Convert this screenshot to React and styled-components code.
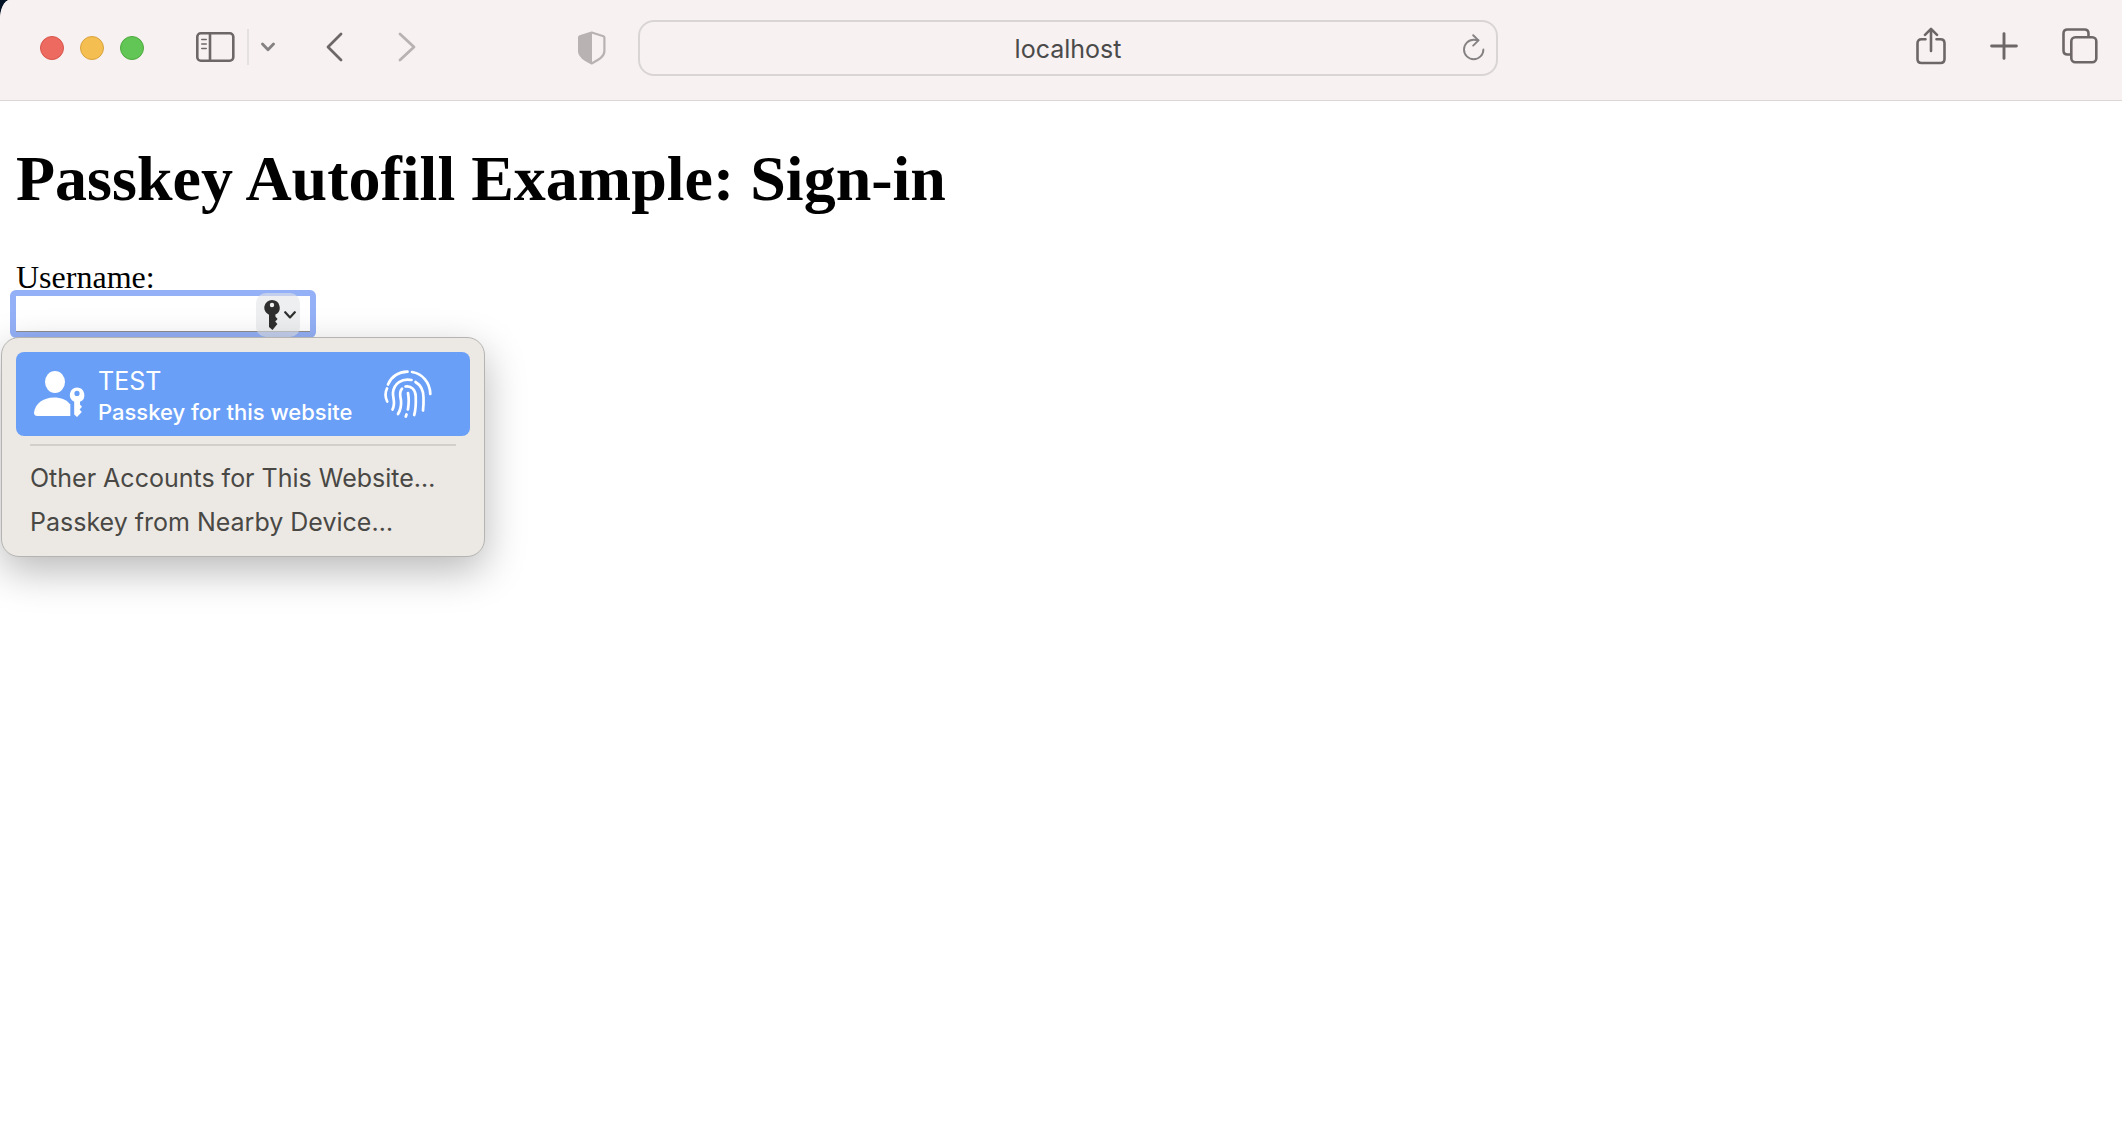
import React from "react";
import styled, { createGlobalStyle } from "styled-components";

const ui = `Inter, "Liberation Sans", sans-serif`;

const tones = {
  strong: "#6e6768",
  medium: "#858182",
  faint: "#b9b2b2",
};

const GlobalStyle = createGlobalStyle`
  *, *::before, *::after { box-sizing: border-box; }
  html { background: #041325; }
  body { margin: 0; }
`;

const Window = styled.div`
  min-height: 100vh;
  background: #fff;
  border-top-left-radius: 10px 20px;
  overflow: hidden;
`;

const Toolbar = styled.header`
  display: flex;
  align-items: center;
  height: 101px;
  padding: 0 24px 4px 40px;
  background: #f7f1f1;
  border-bottom: 1px solid #d9d6d5;
`;

const LeftTools = styled.div`
  display: flex;
  align-items: center;
  flex: 0 1 538px;
`;

const RightTools = styled.div`
  display: flex;
  align-items: center;
  justify-content: flex-end;
  gap: 44px;
  flex: 0 1 600px;
  padding-bottom: 4px;
`;

const CenterTools = styled.div`
  display: flex;
  align-items: center;
  gap: 32px;
  flex: 1 1 auto;
`;

const Lights = styled.div`
  display: flex;
  gap: 16px;
  margin-right: 51px;
`;

const Light = styled.button`
  width: 24px;
  height: 24px;
  padding: 0;
  border: 1px solid ${(p) => p.$edge};
  border-radius: 50%;
  background: ${(p) => p.$fill};
`;

const IconButton = styled.button`
  display: flex;
  padding: 0;
  border: 0;
  background: none;
  color: ${(p) => tones[p.$tone || "strong"]};

  svg { display: block; }
`;

const SidebarGroup = styled.div`
  display: flex;
  align-items: center;
  gap: 12px;
  margin-right: 48px;
  padding-bottom: 2px;
`;

const Divider = styled.span`
  width: 2px;
  height: 36px;
  background: #e6e1e1;
`;

const History = styled.div`
  display: flex;
  gap: 48px;
  padding-bottom: 2px;
`;

const AddressBar = styled.div`
  display: flex;
  align-items: center;
  flex: 1;
  height: 56px;
  padding: 0 10px 0 34px;
  border: 2px solid #d9d5d4;
  border-radius: 16px;
`;

const Address = styled.input`
  flex: 1;
  min-width: 0;
  padding: 2px 0 0;
  border: 0;
  outline: 0;
  background: none;
  color: #4b4a4a;
  font: 400 25px/32px ${ui};
  text-align: center;
`;

const Page = styled.main`
  padding: 40px 16px;
  color: #000;
  font: 32px/32px "Liberation Serif", "Times New Roman", serif;
`;

const Title = styled.h1`
  margin: 2px 0 46px;
  font-size: 64px;
  line-height: 72px;
`;

const Label = styled.label`
  display: block;
`;

const Field = styled.div`
  position: relative;
  width: 306px;
  margin: -3px -6px 0;
`;

const Username = styled.input`
  display: block;
  width: 100%;
  height: 48px;
  padding: 0 56px 0 4px;
  border: 6px solid #94b0f6;
  border-radius: 6px;
  outline: 0;
  background: #fff;
  box-shadow: inset 0 -1px 0 #8d8d8d;
  font: 24px/32px ${ui};
`;

const KeyButton = styled.button`
  position: absolute;
  top: 3px;
  right: 16px;
  display: flex;
  align-items: center;
  justify-content: center;
  gap: 4px;
  width: 44px;
  height: 44px;
  padding: 0 0 0 3px;
  border: 0;
  border-radius: 10px;
  background: rgba(226, 228, 230, 0.6);
  color: #2f2f2f;
`;

const Popup = styled.div`
  position: absolute;
  top: 47px;
  left: -9px;
  width: 484px;
  padding: 14px 14px 12px;
  border: 1px solid #b5b4b2;
  border-radius: 18px;
  background: #ece9e4;
  box-shadow: 0 14px 40px rgba(0, 0, 0, 0.28);
  font-family: ${ui};
`;

const Credential = styled.button`
  display: flex;
  align-items: center;
  gap: 12px;
  width: 100%;
  height: 84px;
  padding: 0 38px 0 18px;
  border: 0;
  border-radius: 8px;
  background: #6a9ff8;
  color: #fff;
  font-family: inherit;
  text-align: left;
`;

const CredentialText = styled.span`
  display: flex;
  flex-direction: column;
  flex: 1;
  gap: 2px;
  padding-top: 4px;
  white-space: nowrap;
`;

const CredentialName = styled.span`
  font-size: 25px;
  line-height: 30px;
`;

const CredentialKind = styled.span`
  font-size: 22px;
  font-weight: 500;
  line-height: 28px;
`;

const Rule = styled.hr`
  height: 2px;
  margin: 8px 14px 10px;
  border: 0;
  background: #d2cec9;
`;

const Option = styled.button`
  display: block;
  width: 100%;
  padding: 0 14px;
  border: 0;
  background: none;
  color: #494845;
  font: 400 25px/44px ${ui};
  text-align: left;
  white-space: nowrap;
`;

const Stroke = ({ w, h, sw = 2.6, children }) => (
  <svg width={w} height={h} viewBox={`0 0 ${w} ${h}`} fill="none" stroke="currentColor"
    strokeWidth={sw} strokeLinecap="round" strokeLinejoin="round" aria-hidden="true">
    {children}
  </svg>
);

const SidebarIcon = () => (
  <Stroke w={40} h={32}>
    <rect x="2.3" y="2.3" width="36" height="27.4" rx="3.5" />
    <path d="M15 2.3v27.4" />
    <path d="M6.800 8.500h4.400M6.800 13h4.400M6.800 17.500h4.400" strokeWidth="1.6" />
  </Stroke>
);

const ShieldIcon = () => (
  <svg width="28" height="34" viewBox="0 0 28 34" aria-hidden="true">
    <path d="M13.7 1.5 25.5 5.3q.9.4.9 1.5V20c0 6-6.5 9-12.7 12.5C7.5 29 1 26 1 20V6.8q0-1.1.9-1.5Z"
      fill="none" stroke="currentColor" strokeWidth="2.2" strokeLinejoin="round" />
    <path d="M14 1.5V32.500C7.500 29 1 26 1 20V6z" fill="currentColor" />
  </svg>
);

const ReloadIcon = () => (
  <Stroke w={24} h={28} sw={1.9}>
    <path d="M21.400 15.500a9.700 9.700 0 1 1-9.700-9.700q2.300 0 4.600.4" />
    <path d="M11.200 1.200 16.500 6.400 11.200 11.600" />
  </Stroke>
);

const ShareIcon = () => (
  <Stroke w={30} h={38}>
    <path d="M9.500 12.300H5.500q-4 0-4 4V32q0 4 4 4h19q4 0 4-4V16.300q0-4-4-4H20.500" />
    <path d="M15 24V2M9 7.800 15 1.800l6 6" />
  </Stroke>
);

const PlusIcon = () => (
  <Stroke w={28} h={28} sw={2.9}>
    <path d="M14 1.600v24.800M1.600 14h24.800" />
  </Stroke>
);

const TabsIcon = () => (
  <Stroke w={36} h={36}>
    <rect x="9.300" y="9.300" width="25" height="25" rx="4" />
    <path d="M26.500 8.500V5.500q0-4-4-4h-17q-4 0-4 4v17q0 4 4 4h3" />
  </Stroke>
);

const PersonKeyIcon = () => (
  <svg width="52" height="48" viewBox="0 0 52 48" fill="currentColor" aria-hidden="true">
    <ellipse cx="21" cy="12" rx="10" ry="11" />
    <path d="M3.500 46Q0 46 0 42.500C1 34 9 27.500 20 27.500c7 0 13 2.500 16.300 7V46Z" />
    <path fillRule="evenodd" d="M43 17.500a7.500 7.500 0 0 1 3 14.300v2.700l2 2.200-2.400 2.700 2.200 2.500L43 47l-2.800-2.600V31.800A7.500 7.500 0 0 1 43 17.500Zm0 3.300a2.600 2.600 0 1 0 0 5.200 2.600 2.600 0 0 0 0-5.200Z" />
  </svg>
);

const KeyIcon = () => (
  <svg width="16" height="30" viewBox="0 0 16 30" fill="currentColor" aria-hidden="true">
    <path fillRule="evenodd" d="M8 0a7.700 7.700 0 0 1 3.400 14.600v2l2.200 2.300-2.400 2.600 2.200 2.400L8.500 30 5 27V14.800A7.700 7.700 0 0 1 8 0Zm0 2.800a2.200 2.200 0 1 0 0 4.400 2.200 2.200 0 0 0 0-4.400Z" />
  </svg>
);

const FingerprintIcon = () => (
  <Stroke w={48} h={48} sw={2.7}>
    <path d="M4 14.500C7.500 6.500 14.500 2 23.500 1.700" />
    <path d="M28 2C38 3.500 46 12 46.300 24" />
    <path d="M3 18.500C1.300 22 1.300 27.500 3.200 31.500" />
    <path d="M8.500 39.500C12 33 8.500 28 9 22.500 10 13.500 18 8 27.500 10" />
    <path d="M31.500 12C37.500 15.500 39.500 21 39.500 27.500 39.700 32 39.500 36 39 40.500" />
    <path d="M18 18.800C14.500 22.500 16.500 27 17 30.500 17.500 36 16.500 40 14 44" />
    <path d="M21.500 16.500C27.500 15.500 31.500 20 31.700 26 32 33 31.800 39.500 30.200 45" />
    <path d="M24 23C25 28.500 24.800 34.500 23.900 39.500M22.500 44.500 21.800 46.500" />
  </Stroke>
);

export default function App() {
  return (
    <>
      <GlobalStyle />
      <Window>
        <Toolbar>
          <LeftTools>
            <Lights>
              <Light $fill="#ec6a5f" $edge="#d8554b" aria-label="Close" />
              <Light $fill="#f4bf50" $edge="#d9a340" aria-label="Minimize" />
              <Light $fill="#61c655" $edge="#4fa93f" aria-label="Zoom" />
            </Lights>
            <SidebarGroup>
              <IconButton aria-label="Show sidebar"><SidebarIcon /></IconButton>
              <Divider />
              <IconButton aria-label="Tab groups" $tone="medium">
                <Stroke w={14} h={10} sw={2.8}><path d="M1.500 2 7 7.800 12.500 2" /></Stroke>
              </IconButton>
            </SidebarGroup>
            <History>
              <IconButton aria-label="Back">
                <Stroke w={24} h={30} sw={2.8}><path d="M18 2 5 15l13 13" /></Stroke>
              </IconButton>
              <IconButton aria-label="Forward" $tone="faint">
                <Stroke w={24} h={30} sw={2.8}><path d="M5 2l14 13L5 28" /></Stroke>
              </IconButton>
            </History>
          </LeftTools>
          <CenterTools>
            <IconButton aria-label="Privacy report" $tone="faint"><ShieldIcon /></IconButton>
            <AddressBar>
              <Address aria-label="Address" defaultValue="localhost" />
              <IconButton aria-label="Reload" $tone="medium"><ReloadIcon /></IconButton>
            </AddressBar>
          </CenterTools>
          <RightTools>
            <IconButton aria-label="Share"><ShareIcon /></IconButton>
            <IconButton aria-label="New tab"><PlusIcon /></IconButton>
            <IconButton aria-label="Tab overview"><TabsIcon /></IconButton>
          </RightTools>
        </Toolbar>
        <Page>
          <Title>Passkey Autofill Example: Sign-in</Title>
          <Label htmlFor="username">Username:</Label>
          <Field>
            <Username id="username" type="text" />
            <KeyButton aria-label="Autofill passkey">
              <KeyIcon />
              <Stroke w={12} h={8} sw={2.2}><path d="M1.200 1.200 6 6.400 10.800 1.200" /></Stroke>
            </KeyButton>
            <Popup>
              <Credential>
                <PersonKeyIcon />
                <CredentialText>
                  <CredentialName>TEST</CredentialName>
                  <CredentialKind>Passkey for this website</CredentialKind>
                </CredentialText>
                <FingerprintIcon />
              </Credential>
              <Rule />
              <Option>Other Accounts for This Website…</Option>
              <Option>Passkey from Nearby Device…</Option>
            </Popup>
          </Field>
        </Page>
      </Window>
    </>
  );
}
